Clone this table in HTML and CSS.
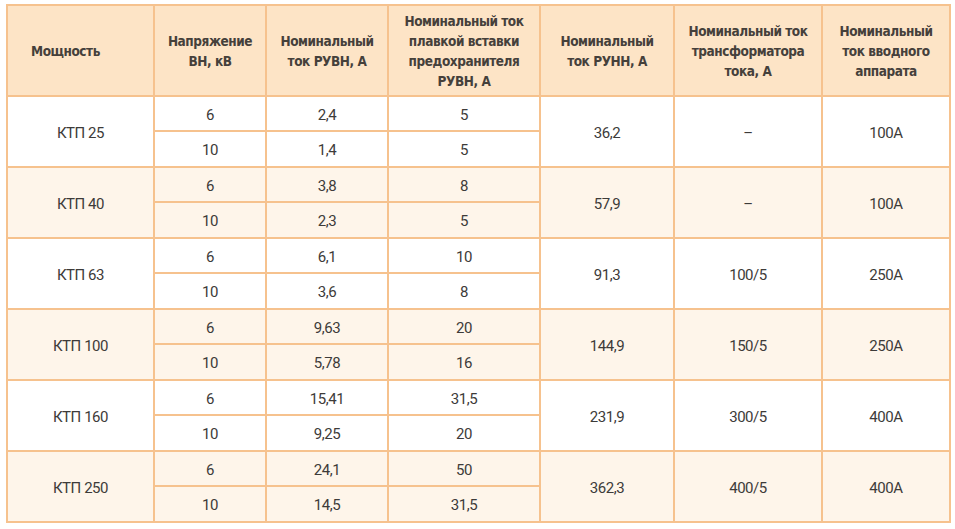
FILE: index.html
```html
<!DOCTYPE html>
<html lang="ru">
<head>
<meta charset="utf-8">
<title>КТП</title>
<link rel="stylesheet" href="styles.css">
</head>
<body>
<table class="spec">
  <colgroup>
    <col class="c1"><col class="c2"><col class="c3"><col class="c4"><col class="c5"><col class="c6"><col class="c7">
  </colgroup>
  <thead>
    <tr>
      <th class="left">Мощность</th>
      <th>Напряжение<br>ВН, кВ</th>
      <th>Номинальный<br>ток РУВН, А</th>
      <th>Номинальный ток<br>плавкой вставки<br>предохранителя<br>РУВН, А</th>
      <th>Номинальный<br>ток РУНН, А</th>
      <th>Номинальный ток<br>трансформатора<br>тока, А</th>
      <th>Номинальный<br>ток вводного<br>аппарата</th>
    </tr>
  </thead>
  <tbody>
    <tr class="a"><td rowspan="2">КТП 25</td><td>6</td><td>2,4</td><td>5</td><td rowspan="2">36,2</td><td rowspan="2">–</td><td rowspan="2">100А</td></tr>
    <tr class="b"><td>10</td><td>1,4</td><td>5</td></tr>
    <tr class="a alt"><td rowspan="2">КТП 40</td><td>6</td><td>3,8</td><td>8</td><td rowspan="2">57,9</td><td rowspan="2">–</td><td rowspan="2">100А</td></tr>
    <tr class="b alt"><td>10</td><td>2,3</td><td>5</td></tr>
    <tr class="a"><td rowspan="2">КТП 63</td><td>6</td><td>6,1</td><td>10</td><td rowspan="2">91,3</td><td rowspan="2">100/5</td><td rowspan="2">250А</td></tr>
    <tr class="b"><td>10</td><td>3,6</td><td>8</td></tr>
    <tr class="a alt"><td rowspan="2">КТП 100</td><td>6</td><td>9,63</td><td>20</td><td rowspan="2">144,9</td><td rowspan="2">150/5</td><td rowspan="2">250А</td></tr>
    <tr class="b alt"><td>10</td><td>5,78</td><td>16</td></tr>
    <tr class="a"><td rowspan="2">КТП 160</td><td>6</td><td>15,41</td><td>31,5</td><td rowspan="2">231,9</td><td rowspan="2">300/5</td><td rowspan="2">400А</td></tr>
    <tr class="b"><td>10</td><td>9,25</td><td>20</td></tr>
    <tr class="a alt"><td rowspan="2">КТП 250</td><td>6</td><td>24,1</td><td>50</td><td rowspan="2">362,3</td><td rowspan="2">400/5</td><td rowspan="2">400А</td></tr>
    <tr class="b alt"><td>10</td><td>14,5</td><td>31,5</td></tr>
  </tbody>
</table>
</body>
</html>
```

FILE: styles.css
```css
html, body {
  margin: 0;
  padding: 0;
  background: #ffffff;
}
body {
  padding: 4px 0 0 6px;
}
.spec {
  border-collapse: collapse;
  table-layout: fixed;
  width: 943px;
  font-family: Roboto, "Liberation Sans", sans-serif;
  font-size: 15px;
  letter-spacing: -0.45px;
  color: #3d3b39;
}
.c1 { width: 147px; }
.c2 { width: 112px; }
.c3 { width: 122px; }
.c4 { width: 152px; }
.c5 { width: 134px; }
.c6 { width: 148px; }
.c7 { width: 128px; }
.spec th, .spec td {
  border: 2px solid #f6c28e;
  text-align: center;
  vertical-align: middle;
  padding: 0;
}
.spec td {
  padding-top: 2px;
}
.spec th {
  background: #fde4c6;
  font-family: "DejaVu Sans Condensed", "DejaVu Sans", sans-serif;
  font-stretch: condensed;
  font-weight: bold;
  font-size: 13.5px;
  line-height: 20px;
  height: 89px;
  color: #45403b;
  letter-spacing: -0.45px;
}
.spec th.left {
  text-align: left;
  padding-left: 23px;
}
.spec tr.a td { height: 31px; }
.spec tr.b td { height: 32px; }
.spec tr.alt td { background: #fef5ea; }
```
